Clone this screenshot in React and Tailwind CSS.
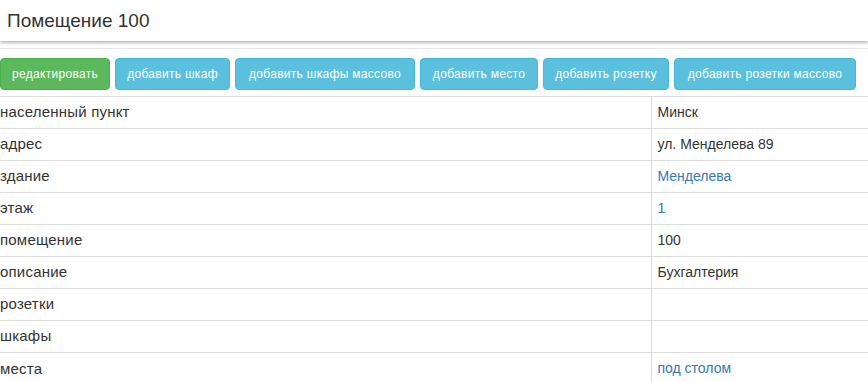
const buttons = [
  { label: 'редактировать', w: 'w-[110px]', tone: 'success' },
  { label: 'добавить шкаф', w: 'w-[115px]', tone: 'info' },
  { label: 'добавить шкафы массово', w: 'w-[180px]', tone: 'info' },
  { label: 'добавить место', w: 'w-[118px]', tone: 'info' },
  { label: 'добавить розетку', w: 'w-[126px]', tone: 'info' },
  { label: 'добавить розетки массово', w: 'w-[182px]', tone: 'info' },
]

const rows = [
  { name: 'населенный пункт', value: 'Минск' },
  { name: 'адрес', value: 'ул. Менделева 89' },
  { name: 'здание', value: 'Менделева', link: true },
  { name: 'этаж', value: '1', link: true },
  { name: 'помещение', value: '100' },
  { name: 'описание', value: 'Бухгалтерия' },
  { name: 'розетки', value: '' },
  { name: 'шкафы', value: '' },
  { name: 'места', value: 'под столом', link: true },
]

export default function App() {
  return (
    <div className="h-[382px] w-[868px] overflow-hidden bg-white text-[#333] font-['Liberation_Sans',Arial,sans-serif]">
      {/* header */}
      <div className="relative z-10 flex h-[41px] items-center bg-white pl-[7px] shadow-[0_2px_3px_rgba(0,0,0,0.28)]">
        <h1 className="text-[19px] leading-none">Помещение 100</h1>
      </div>

      {/* toolbar */}
      <div className="mt-[7px] border-t border-[#e6e6e6] pt-[9px] pb-[6px]">
        <div className="flex gap-[5px]">
          {buttons.map(b => (
            <button
              key={b.label}
              className={`${b.w} h-[32px] rounded-[4px] border text-[12px] leading-none tracking-[0.3px] text-white ${
                b.tone === 'success'
                  ? 'border-[#4cae4c] bg-[#5cb85c]'
                  : 'border-[#46b8da] bg-[#5bc0de]'
              }`}
            >
              {b.label}
            </button>
          ))}
        </div>
      </div>

      {/* details table */}
      <table className="w-full border-collapse text-[14px]">
        <tbody>
          {rows.map(r => (
            <tr key={r.name} className="h-[32px] border-t border-[#dddddd]">
              <td className="w-[651px] p-0 align-middle text-[15px] tracking-[0.2px]">{r.name}</td>
              <td className="border-l border-[#dddddd] pl-[6px] align-middle">
                {r.link ? <a className="text-[#337ab7]">{r.value}</a> : r.value}
              </td>
            </tr>
          ))}
        </tbody>
      </table>
    </div>
  )
}
